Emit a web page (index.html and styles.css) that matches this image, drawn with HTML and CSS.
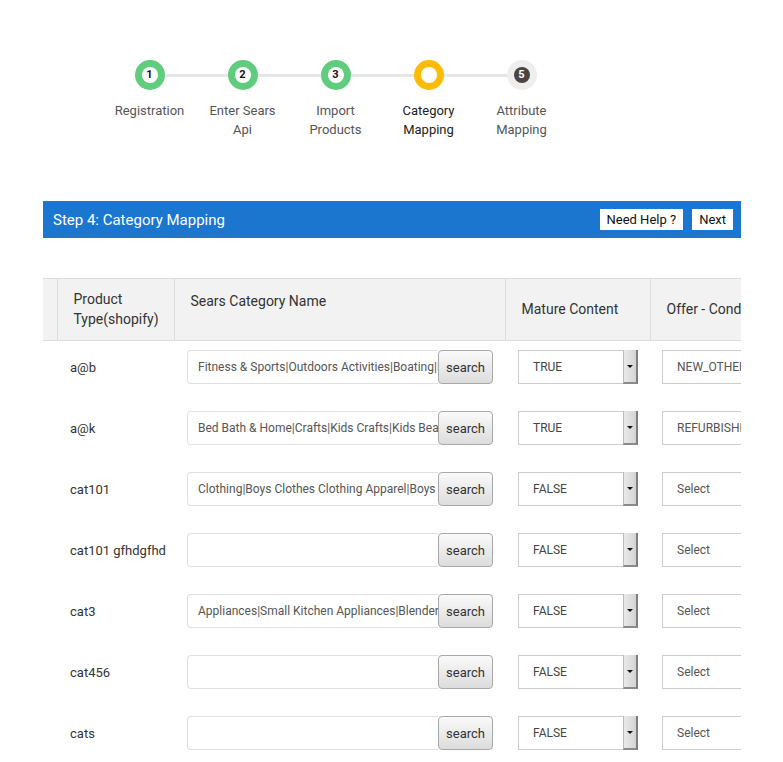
FILE: index.html
```html
<!DOCTYPE html>
<html>
<head>
<meta charset="utf-8">
<link rel="stylesheet" href="styles.css">
</head>
<body>
<div class="page">
  <ol class="stepper">
    <li class="step done"><span class="dot"><span class="num">1</span></span><span class="label">Registration</span></li>
    <li class="step done"><span class="dot"><span class="num">2</span></span><span class="label">Enter Sears<br>Api</span></li>
    <li class="step done"><span class="dot"><span class="num">3</span></span><span class="label">Import<br>Products</span></li>
    <li class="step active"><span class="dot"><span class="num"></span></span><span class="label">Category<br>Mapping</span></li>
    <li class="step todo"><span class="dot"><span class="num">5</span></span><span class="label">Attribute<br>Mapping</span></li>
  </ol>

  <div class="panel-head">
    <h2 class="panel-title">Step 4: Category Mapping</h2>
    <div class="panel-actions">
      <button class="btn-white">Need Help ?</button>
      <button class="btn-white">Next</button>
    </div>
  </div>

  <div class="table-wrap">
    <table class="grid">
      <colgroup>
        <col class="c-check"><col class="c-type"><col class="c-cat"><col class="c-mature"><col class="c-offer">
      </colgroup>
      <thead>
        <tr>
          <th></th>
          <th>Product<br>Type(shopify)</th>
          <th class="th-top">Sears Category Name</th>
          <th>Mature Content</th>
          <th>Offer - Condition</th>
        </tr>
      </thead>
      <tbody>
        <tr>
          <td></td><td>a@b</td>
          <td><div class="igroup"><div class="itext">Fitness &amp; Sports|Outdoors Activities|Boating|Boats</div><button class="btn-search">search</button></div></td>
          <td><div class="sel"><span class="sel-val">TRUE</span><span class="sel-arrow"></span></div></td>
          <td><div class="sel2">NEW_OTHER</div></td>
        </tr>
        <tr>
          <td></td><td>a@k</td>
          <td><div class="igroup"><div class="itext">Bed Bath &amp; Home|Crafts|Kids Crafts|Kids Beads</div><button class="btn-search">search</button></div></td>
          <td><div class="sel"><span class="sel-val">TRUE</span><span class="sel-arrow"></span></div></td>
          <td><div class="sel2">REFURBISHED</div></td>
        </tr>
        <tr>
          <td></td><td>cat101</td>
          <td><div class="igroup"><div class="itext">Clothing|Boys Clothes Clothing Apparel|Boys Shirts</div><button class="btn-search">search</button></div></td>
          <td><div class="sel"><span class="sel-val">FALSE</span><span class="sel-arrow"></span></div></td>
          <td><div class="sel2">Select</div></td>
        </tr>
        <tr>
          <td></td><td>cat101 gfhdgfhd</td>
          <td><div class="igroup"><div class="itext"></div><button class="btn-search">search</button></div></td>
          <td><div class="sel"><span class="sel-val">FALSE</span><span class="sel-arrow"></span></div></td>
          <td><div class="sel2">Select</div></td>
        </tr>
        <tr>
          <td></td><td>cat3</td>
          <td><div class="igroup"><div class="itext">Appliances|Small Kitchen Appliances|Blenders</div><button class="btn-search">search</button></div></td>
          <td><div class="sel"><span class="sel-val">FALSE</span><span class="sel-arrow"></span></div></td>
          <td><div class="sel2">Select</div></td>
        </tr>
        <tr>
          <td></td><td>cat456</td>
          <td><div class="igroup"><div class="itext"></div><button class="btn-search">search</button></div></td>
          <td><div class="sel"><span class="sel-val">FALSE</span><span class="sel-arrow"></span></div></td>
          <td><div class="sel2">Select</div></td>
        </tr>
        <tr>
          <td></td><td>cats</td>
          <td><div class="igroup"><div class="itext"></div><button class="btn-search">search</button></div></td>
          <td><div class="sel"><span class="sel-val">FALSE</span><span class="sel-arrow"></span></div></td>
          <td><div class="sel2">Select</div></td>
        </tr>
      </tbody>
    </table>
  </div>
</div>
</body>
</html>
```
FILE: styles.css
```css
html { overflow: hidden; }
body {
  margin: 0;
  background: #fff;
  font-family: Roboto, "Noto Sans", Arial, sans-serif;
  color: #333;
}
.page {
  width: 698px;
  margin-left: 43px;
}

/* stepper */
.stepper {
  list-style: none;
  margin: 60px 0 0 60px;
  padding: 0;
  display: flex;
}
.step {
  width: 93px;
  display: flex;
  flex-direction: column;
  align-items: center;
  position: relative;
}
.step:not(:last-child)::after {
  content: "";
  position: absolute;
  left: 46px;
  width: 93px;
  top: 14px;
  height: 3px;
  background: #e6e6e6;
  z-index: 0;
}
.dot {
  width: 30px;
  height: 30px;
  border-radius: 50%;
  display: flex;
  align-items: center;
  justify-content: center;
  position: relative;
  z-index: 1;
}
.num {
  width: 16px;
  height: 16px;
  border-radius: 50%;
  background: #fff;
  color: #111;
  font-size: 11px;
  font-weight: 700;
  line-height: 16px;
  text-align: center;
}
.done .dot { background: #5fcd7d; }
.active .dot { background: #fbbb07; }
.todo .dot { background: #eeeeee; }
.todo .num { background: #4a4542; color: #fff; }
.label {
  margin-top: 11px;
  font-size: 13px;
  line-height: 19px;
  color: #555;
  text-align: center;
}
.active .label { color: #222; }

/* panel head */
.panel-head {
  margin-top: 62px;
  height: 37px;
  background: #1a76cf;
  display: flex;
  align-items: center;
  justify-content: space-between;
  padding: 0 8px 0 10px;
}
.panel-title {
  margin: 0;
  font-size: 15px;
  font-weight: 400;
  color: #fff;
}
.panel-actions {
  display: flex;
  gap: 9px;
}
.btn-white {
  background: #fff;
  border: 0;
  height: 21px;
  padding: 0 7px;
  margin-top: -1px;
  font-family: inherit;
  font-size: 13px;
  color: #111;
}

/* table */
.table-wrap {
  margin-top: 40px;
  overflow: hidden;
}
.grid {
  table-layout: fixed;
  border-collapse: collapse;
  width: 757px;
}
.c-check { width: 14px; }
.c-type { width: 117px; }
.c-cat { width: 331px; }
.c-mature { width: 145px; }
.c-offer { width: 150px; }
.grid th {
  background: #f2f2f2;
  border: 1px solid #dddddd;
  border-left: 0;
  height: 41px;
  padding: 9px 16px 11px;
  text-align: left;
  font-weight: 400;
  font-size: 14px;
  line-height: 20px;
  color: #333;
  white-space: nowrap;
}
.grid th.th-top {
  vertical-align: top;
  padding-top: 12px;
  padding-bottom: 8px;
}
.grid td {
  padding: 9px 13px 18px;
  font-size: 13px;
  color: #333;
  vertical-align: middle;
  white-space: nowrap;
}
.grid td:last-child { padding-left: 12px; }

.igroup {
  display: flex;
  width: 306px;
  height: 34px;
}
.itext {
  flex: 1;
  min-width: 0;
  border: 1px solid #e0e0e0;
  border-right: 0;
  border-radius: 4px 0 0 4px;
  padding-left: 10px;
  font-size: 12px;
  line-height: 32px;
  color: #555;
  overflow: hidden;
  white-space: nowrap;
}
.btn-search {
  width: 55px;
  height: 34px;
  border: 1px solid #a8a8a8;
  border-radius: 4px;
  background: linear-gradient(#fafafa, #dcdcdc);
  font-family: inherit;
  font-size: 13px;
  color: #333;
  padding: 0;
}
.sel {
  display: flex;
  width: 120px;
  height: 34px;
  box-sizing: border-box;
  border: 1px solid #cccccc;
  background: #fff;
}
.sel-val {
  flex: 1;
  padding-left: 14px;
  font-size: 12px;
  line-height: 32px;
  color: #444;
}
.sel-arrow {
  width: 12px;
  background: linear-gradient(90deg, #e9e9e9, #d4d4d4);
  border-right: 2px solid #7d7d7d;
  border-bottom: 2px solid #8a8a8a;
  border-left: 1px solid #bbb;
  margin: -1px -1px -1px 0;
  display: flex;
  align-items: center;
  justify-content: center;
}
.sel-arrow::before {
  content: "";
  border-left: 3px solid transparent;
  border-right: 3px solid transparent;
  border-top: 3px solid #111;
}
.sel2 {
  width: 125px;
  height: 34px;
  box-sizing: border-box;
  border: 1px solid #cccccc;
  padding-left: 14px;
  font-size: 12px;
  line-height: 32px;
  color: #555;
  overflow: hidden;
}
```
